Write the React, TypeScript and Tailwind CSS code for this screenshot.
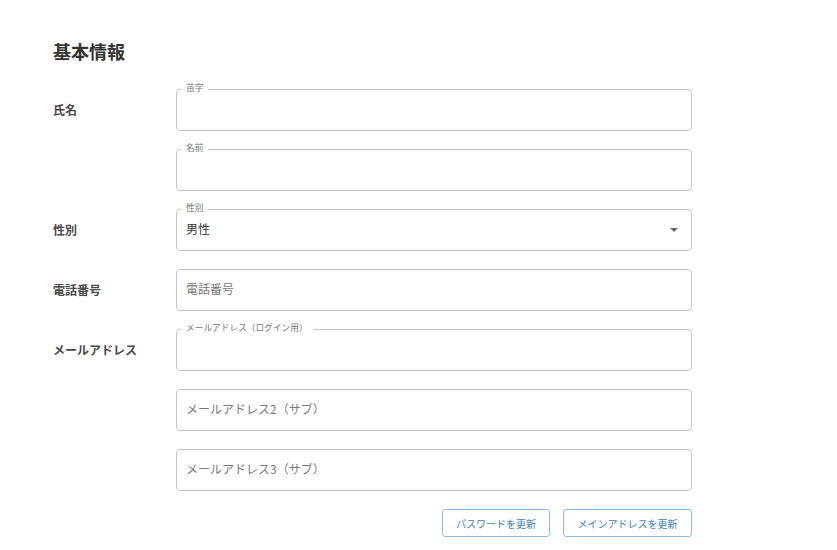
import React from 'react';

interface FieldProps {
  legend?: string;
  placeholder?: string;
  value?: string;
  select?: boolean;
}

const Field: React.FC<FieldProps> = ({ legend, placeholder, value, select }) => {
  return (
    <div className="relative h-[42px] w-[516px] rounded-[4px] border border-[#c4c4c4] flex items-center pl-[9px] pr-[12px] pb-[3px]">
      {legend && (
        <span className="absolute left-[4px] top-[-9px] bg-white px-[5px] text-[8.7px] leading-[14px] text-[#777]">
          {legend}
        </span>
      )}
      {value ? (
        <span className="text-[12px] text-[#333]">{value}</span>
      ) : (
        <span className="text-[12px] text-[#7a7a7a]">{placeholder}</span>
      )}
      {select && (
        <span className="ml-auto mr-[1px] mt-[3px] h-0 w-0 border-l-[4px] border-r-[4px] border-t-[4px] border-l-transparent border-r-transparent border-t-[#666]"></span>
      )}
    </div>
  );
};

const rows: { label?: string; field: FieldProps }[] = [
  { label: '氏名', field: { legend: '苗字' } },
  { field: { legend: '名前' } },
  { label: '性別', field: { legend: '性別', value: '男性', select: true } },
  { label: '電話番号', field: { placeholder: '電話番号' } },
  { label: 'メールアドレス', field: { legend: 'メールアドレス（ログイン用）' } },
  { field: { placeholder: 'メールアドレス2（サブ）' } },
  { field: { placeholder: 'メールアドレス3（サブ）' } },
];

export default function App() {
  return (
    <div
      className="min-h-screen bg-white pl-[53px] pt-[39px]"
      style={{ fontFamily: '"Noto Sans CJK JP", "Noto Sans", sans-serif' }}
    >
      {/* Title */}
      <h2 className="text-[18px] font-bold leading-[24px] text-[#333]">基本情報</h2>

      {/* Form rows */}
      <div className="mt-[26px] flex flex-col gap-[18px]">
        {rows.map((row, i) => (
          <div key={i} className="flex items-center">
            <div className="w-[123px] text-[12px] font-bold text-[#4a4a4a]">{row.label}</div>
            <Field {...row.field} />
          </div>
        ))}

        {/* Buttons */}
        <div className="flex w-[639px] justify-end gap-[13px]">
          <button className="h-[28px] w-[108px] rounded-[3px] border border-[#8dbbe4] text-[10px] text-[#3a84c6]">
            パスワードを更新
          </button>
          <button className="h-[28px] w-[129px] rounded-[3px] border border-[#8dbbe4] text-[10px] text-[#3a84c6]">
            メインアドレスを更新
          </button>
        </div>
      </div>
    </div>
  );
}
